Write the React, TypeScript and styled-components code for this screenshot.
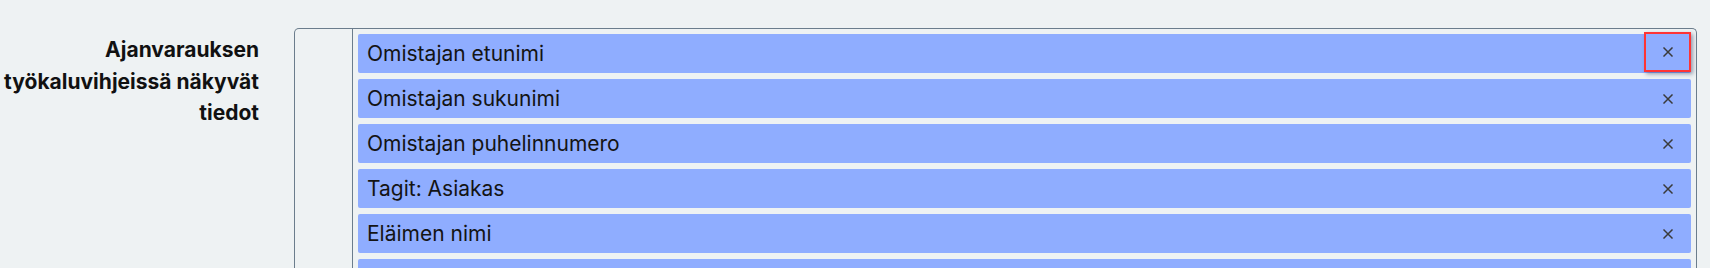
import React from "react";
import styled, { createGlobalStyle } from "styled-components";

const Global = createGlobalStyle`
  html, body { margin: 0; padding: 0; background: #eef2f3; }
  body { font-family: Inter, "Noto Sans", sans-serif; color: #111; overflow: hidden; }
`;

const Page = styled.div`
  display: flex;
  align-items: flex-start;
  padding: 28px 0 0 0;
  height: 240px;
  overflow: hidden;
`;

const Label = styled.div`
  width: 259px;
  flex: none;
  text-align: right;
  font-weight: 700;
  font-size: 21px;
  line-height: 31.5px;
  padding-top: 6px;
  margin-right: 35px;
`;

const Panel = styled.div`
  flex: none;
  width: 1403px;
  height: 260px;
  border: 1px solid #6b7d8c;
  border-bottom: none;
  border-radius: 5px 5px 0 0;
  display: flex;
  box-sizing: border-box;
`;

const Gutter = styled.div`
  width: 57px;
  flex: none;
  border-right: 1px solid #6b7d8c;
`;

const List = styled.div`
  flex: 1;
  display: flex;
  flex-direction: column;
  gap: 6px;
  padding: 5px 5px 0 5px;
`;

const Item = styled.div`
  height: 39px;
  flex: none;
  background: #8fadff;
  border-radius: 2px;
  display: flex;
  align-items: center;
  font-size: 21px;
  color: #141414;
  padding-left: 9px;
`;

const ItemText = styled.span`
  flex: 1;
  white-space: nowrap;
`;

const Remove = styled.button<{ $focused?: boolean }>`
  width: 47px;
  height: ${(p) => (p.$focused ? "40px" : "39px")};
  margin-top: ${(p) => (p.$focused ? "-3px" : "0")};
  flex: none;
  box-sizing: border-box;
  background: transparent;
  border: ${(p) => (p.$focused ? "2px solid #ff3434" : "none")};
  box-shadow: ${(p) => (p.$focused ? "2px 2px 4px rgba(40,50,90,0.45)" : "none")};
  padding: 0;
  display: flex;
  align-items: center;
  justify-content: center;
  color: #3a3a3a;
  cursor: pointer;
`;

const XIcon = () => (
  <svg width="10" height="10" viewBox="0 0 10 10">
    <path d="M1 1 L9 9 M9 1 L1 9" stroke="currentColor" strokeWidth="1.5" strokeLinecap="square" />
  </svg>
);

const items = [
  "Omistajan etunimi",
  "Omistajan sukunimi",
  "Omistajan puhelinnumero",
  "Tagit: Asiakas",
  "Eläimen nimi",
  "",
];

export default function App() {
  return (
    <>
      <Global />
      <Page>
        <Label>
          Ajanvarauksen
          <br />
          työkaluvihjeissä näkyvät
          <br />
          tiedot
        </Label>
        <Panel>
          <Gutter />
          <List>
            {items.map((t, i) => (
              <Item key={i}>
                <ItemText>{t}</ItemText>
                <Remove $focused={i === 0} aria-label="Poista">
                  <XIcon />
                </Remove>
              </Item>
            ))}
          </List>
        </Panel>
      </Page>
    </>
  );
}
